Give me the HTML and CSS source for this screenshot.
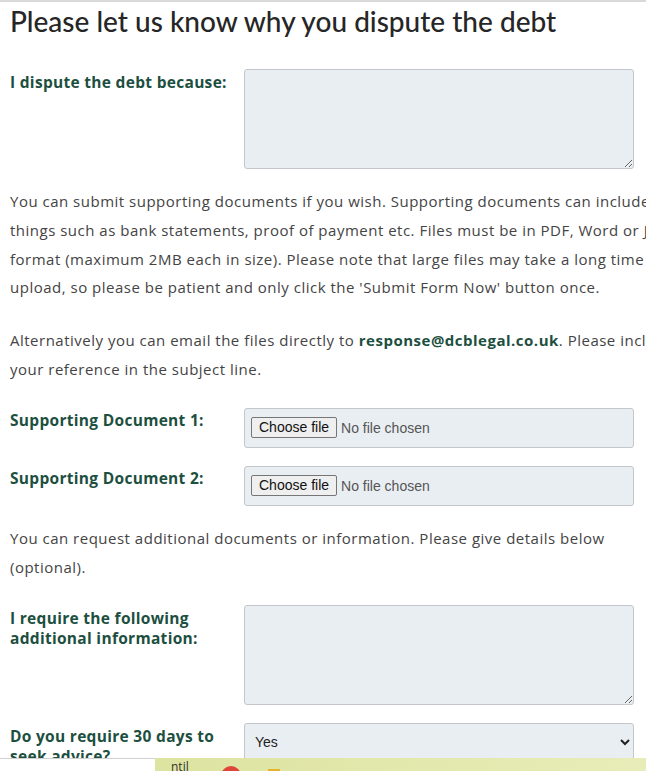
FILE: index.html
```html
<!DOCTYPE html>
<html lang="en">
<head>
    <meta charset="UTF-8">
    <meta name="viewport" content="width=device-width, initial-scale=1.0">
    <title>Dispute the debt</title>
    <link rel="stylesheet" href="styles.css">
</head>
<body>
    <div class="page">
        <h1>Please let us know why you dispute the debt</h1>

        <div class="row">
            <label class="label" for="reason">I dispute the debt because:</label>
            <textarea id="reason" class="field area"></textarea>
        </div>

        <p class="text">
            You can submit supporting documents if you wish. Supporting documents can include<br>
            things such as bank statements, proof of payment etc. Files must be in PDF, Word or JPEG<br>
            format (maximum 2MB each in size). Please note that large files may take a long time to<br>
            upload, so please be patient and only click the 'Submit Form Now' button once.
        </p>
        <p class="text">
            Alternatively you can email the files directly to <strong>response@dcblegal.co.uk</strong>. Please include<br>
            your reference in the subject line.
        </p>

        <div class="row">
            <label class="label file-label" for="doc1">Supporting Document 1:</label>
            <div class="field file">
                <label class="file-btn" for="doc1">Choose file</label>
                <span class="file-name">No file chosen</span>
                <input id="doc1" class="file-input" type="file">
            </div>
        </div>
        <div class="row">
            <label class="label file-label" for="doc2">Supporting Document 2:</label>
            <div class="field file">
                <label class="file-btn" for="doc2">Choose file</label>
                <span class="file-name">No file chosen</span>
                <input id="doc2" class="file-input" type="file">
            </div>
        </div>

        <p class="text">
            You can request additional documents or information. Please give details below<br>
            (optional).
        </p>

        <div class="row">
            <label class="label" for="info">I require the following additional information:</label>
            <textarea id="info" class="field area"></textarea>
        </div>

        <div class="row">
            <label class="label" for="advice">Do you require 30 days to seek advice?</label>
            <select id="advice" class="field select">
                <option>Yes</option>
                <option>No</option>
            </select>
        </div>
    </div>

    <div class="bottom-bar">
        <div class="bar-left"></div>
        <div class="bar-right">
            <span class="bar-text">ntil</span>
            <span class="dot-red"></span>
            <span class="dot-yellow"></span>
        </div>
    </div>
</body>
</html>
```

FILE: styles.css
```css
html, body {
    margin: 0;
    padding: 0;
    overflow: hidden;
}
body {
    font-family: 'Open Sans', 'Noto Sans', sans-serif;
    color: #444;
    background: white;
    border-top: 2px solid #d9d9d9;
}
.page {
    width: 760px;
    padding: 0 10px;
}
h1 {
    font-family: 'Lato', sans-serif;
    font-size: 28px;
    font-weight: 500;
    color: #262626;
    margin: 2px 0 31px 0;
    line-height: 34px;
}
.row {
    display: flex;
    align-items: flex-start;
    margin-bottom: 18px;
}
.label {
    flex: 0 0 234px;
    font-family: 'Open Sans', sans-serif;
    font-weight: 700;
    font-size: 15.5px;
    letter-spacing: 0.3px;
    line-height: 20px;
    color: #1d4f3f;
    padding-top: 3px;
    padding-right: 8px;
    box-sizing: border-box;
}
.file-label {
    padding-top: 2px;
}
.field {
    width: 390px;
    box-sizing: border-box;
    background: #e9eef3;
    border: 1px solid #c3c6ca;
    border-radius: 3px;
}
.area {
    height: 100px;
    resize: vertical;
}
.file {
    height: 40px;
    padding: 7px 6px;
    display: flex;
    align-items: center;
    font-family: Arial, 'Liberation Sans', sans-serif;
    font-size: 14px;
    color: #555;
}
.file-btn {
    display: inline-block;
    height: 21px;
    line-height: 19px;
    box-sizing: border-box;
    padding: 0 7px;
    margin-right: 4px;
    background: #efefef;
    border: 1px solid #767676;
    border-radius: 2px;
    color: #111;
    cursor: pointer;
}
.file-input {
    display: none;
}
.select {
    height: 38px;
    padding: 0 6px;
    font-family: Arial, 'Liberation Sans', sans-serif;
    font-size: 14px;
    color: #222;
}
.text {
    font-size: 15px;
    letter-spacing: 0.5px;
    line-height: 28.8px;
    margin: 0 0 24px 0;
    white-space: nowrap;
}
.text strong {
    color: #1d4f3f;
}
.bottom-bar {
    position: fixed;
    left: 0;
    right: 0;
    bottom: 0;
    height: 13px;
    display: flex;
}
.bar-left {
    width: 155px;
    background: white;
    border-top: 1px solid #d0d0d0;
}
.bar-right {
    flex: 1;
    background: linear-gradient(90deg, #dde3a0, #e8ecb8);
    position: relative;
    overflow: hidden;
}
.bar-text {
    position: absolute;
    left: 16px;
    top: 2px;
    font-size: 12px;
    line-height: 14px;
    color: #333;
}
.dot-red {
    position: absolute;
    left: 66px;
    top: 8px;
    width: 20px;
    height: 20px;
    border-radius: 50%;
    background: #e0453a;
}
.dot-yellow {
    position: absolute;
    left: 113px;
    top: 11px;
    width: 12px;
    height: 12px;
    background: #e8b22a;
}
```
